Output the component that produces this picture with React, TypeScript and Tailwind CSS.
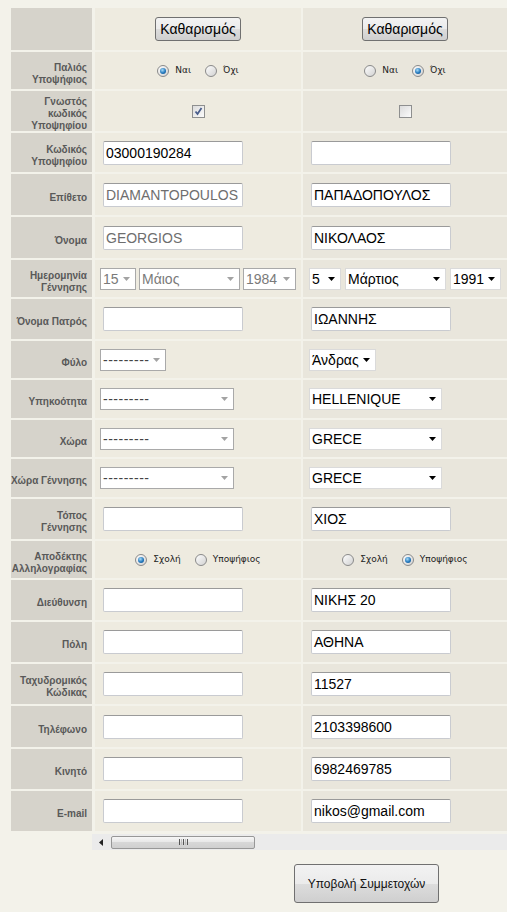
import React from 'react'

type Cell =
    | { kind: 'empty' }
    | { kind: 'button' }
    | { kind: 'radio'; options: string[]; checked: number }
    | { kind: 'check'; checked: boolean }
    | { kind: 'input'; value: string; disabled?: boolean }
    | { kind: 'select'; value: string; w: number; disabled?: boolean }
    | { kind: 'date'; parts: { value: string; w: number }[]; disabled?: boolean }

interface Row {
    label: string[]
    h: number
    left: Cell
    right: Cell
}

const rows: Row[] = [
    { label: [], h: 42, left: { kind: 'button' }, right: { kind: 'button' } },
    { label: ['Παλιός', 'Υποψήφιος'], h: 37, left: { kind: 'radio', options: ['Ναι', 'Όχι'], checked: 0 }, right: { kind: 'radio', options: ['Ναι', 'Όχι'], checked: 1 } },
    { label: ['Γνωστός', 'κωδικός', 'Υποψηφίου'], h: 40, left: { kind: 'check', checked: true }, right: { kind: 'check', checked: false } },
    { label: ['Κωδικός', 'Υποψηφίου'], h: 39, left: { kind: 'input', value: '03000190284' }, right: { kind: 'input', value: '' } },
    { label: ['Επίθετο'], h: 41, left: { kind: 'input', value: 'DIAMANTOPOULOS', disabled: true }, right: { kind: 'input', value: 'ΠΑΠΑΔΟΠΟΥΛΟΣ' } },
    { label: ['Όνομα'], h: 41, left: { kind: 'input', value: 'GEORGIOS', disabled: true }, right: { kind: 'input', value: 'ΝΙΚΟΛΑΟΣ' } },
    {
        label: ['Ημερομηνία', 'Γέννησης'], h: 37,
        left: { kind: 'date', disabled: true, parts: [{ value: '15', w: 36 }, { value: 'Μάιος', w: 101 }, { value: '1984', w: 53 }] },
        right: { kind: 'date', parts: [{ value: '5', w: 32 }, { value: 'Μάρτιος', w: 101 }, { value: '1991', w: 51 }] },
    },
    { label: ['Όνομα Πατρός'], h: 40, left: { kind: 'input', value: '' }, right: { kind: 'input', value: 'ΙΩΑΝΝΗΣ' } },
    { label: ['Φύλο'], h: 37, left: { kind: 'select', value: '---------', w: 66, disabled: true }, right: { kind: 'select', value: 'Άνδρας', w: 67 } },
    { label: ['Υπηκοότητα'], h: 38, left: { kind: 'select', value: '---------', w: 134, disabled: true }, right: { kind: 'select', value: 'HELLENIQUE', w: 133 } },
    { label: ['Χώρα'], h: 37, left: { kind: 'select', value: '---------', w: 134, disabled: true }, right: { kind: 'select', value: 'GRECE', w: 133 } },
    { label: ['Χώρα Γέννησης'], h: 38, left: { kind: 'select', value: '---------', w: 134, disabled: true }, right: { kind: 'select', value: 'GRECE', w: 133 } },
    { label: ['Τόπος', 'Γέννησης'], h: 40, left: { kind: 'input', value: '' }, right: { kind: 'input', value: 'ΧΙΟΣ' } },
    { label: ['Αποδέκτης', 'Αλληλογραφίας'], h: 37, left: { kind: 'radio', options: ['Σχολή', 'Υποψήφιος'], checked: 0 }, right: { kind: 'radio', options: ['Σχολή', 'Υποψήφιος'], checked: 1 } },
    { label: ['Διεύθυνση'], h: 40, left: { kind: 'input', value: '' }, right: { kind: 'input', value: 'ΝΙΚΗΣ 20' } },
    { label: ['Πόλη'], h: 40, left: { kind: 'input', value: '' }, right: { kind: 'input', value: 'ΑΘΗΝΑ' } },
    { label: ['Ταχυδρομικός', 'Κώδικας'], h: 40, left: { kind: 'input', value: '' }, right: { kind: 'input', value: '11527' } },
    { label: ['Τηλέφωνο'], h: 41, left: { kind: 'input', value: '' }, right: { kind: 'input', value: '2103398600' } },
    { label: ['Κινητό'], h: 40, left: { kind: 'input', value: '' }, right: { kind: 'input', value: '6982469785' } },
    { label: ['E-mail'], h: 40, left: { kind: 'input', value: '' }, right: { kind: 'input', value: 'nikos@gmail.com' } },
]

function Radio({ checked }: { checked: boolean }) {
    return (
        <span className="relative inline-block w-[12px] h-[12px] rounded-full border border-[#8a8a8a] bg-linear-to-br from-[#fdfdfd] to-[#d2d2d2] shrink-0">
            {checked && (
                <span className="absolute left-[2px] top-[2px] w-[6px] h-[6px] rounded-full bg-[radial-gradient(circle_at_40%_35%,#a8dcf8,#2378bd_55%,#0d4a80)]" />
            )}
        </span>
    )
}

function Arrow({ disabled }: { disabled?: boolean }) {
    return (
        <svg width="7" height="4" viewBox="0 0 7 4" className="shrink-0">
            <path d="M0 0 H7 L3.5 4 Z" fill={disabled ? '#a3a3a3' : '#000'} />
        </svg>
    )
}

function SelectBox({ value, w, disabled }: { value: string; w: number; disabled?: boolean }) {
    const dashes = value.startsWith('-')
    return (
        <div
            className={`h-[22px] flex items-center justify-between pl-[2px] pr-[5px] bg-white border text-[14px] leading-none ${disabled ? 'border-[#a9a9a9] text-[#7a7a7a]' : 'border-[#dadada] text-black'}`}
            style={{ width: w }}
        >
            <span className={dashes ? 'text-[#444] tracking-[0.5px]' : ''}>{value}</span>
            <Arrow disabled={disabled} />
        </div>
    )
}

function CellContent({ cell, side }: { cell: Cell; side: 'l' | 'r' }) {
    switch (cell.kind) {
        case 'button':
            return (
                <div className="flex-1 flex justify-center">
                    <button className="h-[24px] px-[4px] border border-[#707070] rounded-[3px] bg-[linear-gradient(#f3f3f3,#ebebeb_50%,#dddddd_50%,#cfcfcf)] text-[14px] text-black leading-none">
                        Καθαρισμός
                    </button>
                </div>
            )
        case 'radio':
            return (
                <div className="flex-1 flex justify-center items-center font-['DejaVu_Sans',sans-serif] text-[9px] text-[#222]">
                    {cell.options.map((o, i) => (
                        <span key={o} className={`flex items-center gap-[6px] ${i > 0 ? 'ml-[14px]' : ''}`}>
                            <Radio checked={cell.checked === i} />
                            <span>{o}</span>
                        </span>
                    ))}
                </div>
            )
        case 'check':
            return (
                <div className="flex-1 flex justify-center">
                    <span className="relative w-[13px] h-[13px] border border-[#8e8f8f] bg-linear-to-br from-[#dcdcdc] to-[#fbfbfb]">
                        {cell.checked && (
                            <svg width="11" height="11" viewBox="0 0 11 11" className="absolute left-0 top-0">
                                <path d="M2.5 5.5 L4.5 8 L8.5 2" fill="none" stroke="#4a5e8c" strokeWidth="1.8" />
                            </svg>
                        )}
                    </span>
                </div>
            )
        case 'input':
            return (
                <div className="pl-[8px]">
                    <div
                        className={`w-[140px] h-[24px] bg-white border border-[#c9cbd0] border-t-[#9a9a9a] rounded-[2px] px-[2px] flex items-center text-[14px] leading-none ${cell.disabled ? 'text-[#6e6e6e]' : 'text-black'}`}
                    >
                        {cell.value}
                    </div>
                </div>
            )
        case 'select':
            return (
                <div className={side === 'l' ? 'pl-[5px]' : 'pl-[6px]'}>
                    <SelectBox value={cell.value} w={cell.w} disabled={cell.disabled} />
                </div>
            )
        case 'date':
            return (
                <div className={`flex ${side === 'l' ? 'pl-[5px] gap-[3px]' : 'pl-[6px] gap-[4px]'}`}>
                    {cell.parts.map((p) => (
                        <SelectBox key={p.value} value={p.value} w={p.w} disabled={cell.disabled} />
                    ))}
                </div>
            )
        default:
            return null
    }
}

export default function App() {
    return (
        <div className="w-[507px] h-[912px] overflow-hidden bg-[#f3f2ea] pt-[8px] pl-[11px] font-['Liberation_Sans',Arial,sans-serif]">
            <div className="flex flex-col gap-[2px]">
                {rows.map((r, idx) => (
                    <div key={idx} className="flex" style={{ height: r.h }}>
                        <div className="w-[81px] shrink-0 bg-[#d6d3cb] flex items-center justify-end pr-[5px] pt-[6px] text-right text-[10px] leading-[12px] font-bold text-[#595959] whitespace-nowrap">
                            <div>
                                {r.label.map((l) => (
                                    <div key={l}>{l}</div>
                                ))}
                            </div>
                        </div>
                        <div className="ml-[3px] w-[206px] shrink-0 bg-[#eeebe0] flex items-center">
                            <CellContent cell={r.left} side="l" />
                        </div>
                        <div className="ml-[2px] w-[204px] shrink-0 bg-[#e9e6dc] flex items-center">
                            <CellContent cell={r.right} side="r" />
                        </div>
                    </div>
                ))}
            </div>

            {/* horizontal scroll bar under the data columns */}
            <div className="ml-[81px] mt-[3px] h-[16px] bg-[#ebebeb] flex items-center">
                <svg width="4" height="7" viewBox="0 0 4 7" className="ml-[7px]">
                    <path d="M4 0 V7 L0 3.5 Z" fill="#222" />
                </svg>
                <div className="ml-[8px] w-[144px] h-[13px] rounded-[2px] border border-[#979797] bg-[linear-gradient(#f6f6f6,#e6e6e6_50%,#d7d7d7_50%,#cfcfcf)] flex items-center justify-center gap-[1px]">
                    <span className="w-[1px] h-[6px] bg-[#555]" />
                    <span className="w-[1px] h-[6px] bg-[#bbb]" />
                    <span className="w-[1px] h-[6px] bg-[#555]" />
                    <span className="w-[1px] h-[6px] bg-[#bbb]" />
                    <span className="w-[1px] h-[6px] bg-[#555]" />
                </div>
            </div>

            <div className="mt-[14px] ml-[283px]">
                <button className="w-[145px] h-[39px] border border-[#707070] rounded-[3px] bg-[linear-gradient(#f2f2f2,#ebebeb_50%,#dddddd_50%,#cfcfcf)] text-[12px] text-[#111]">
                    Υποβολή Συμμετοχών
                </button>
            </div>
        </div>
    )
}
